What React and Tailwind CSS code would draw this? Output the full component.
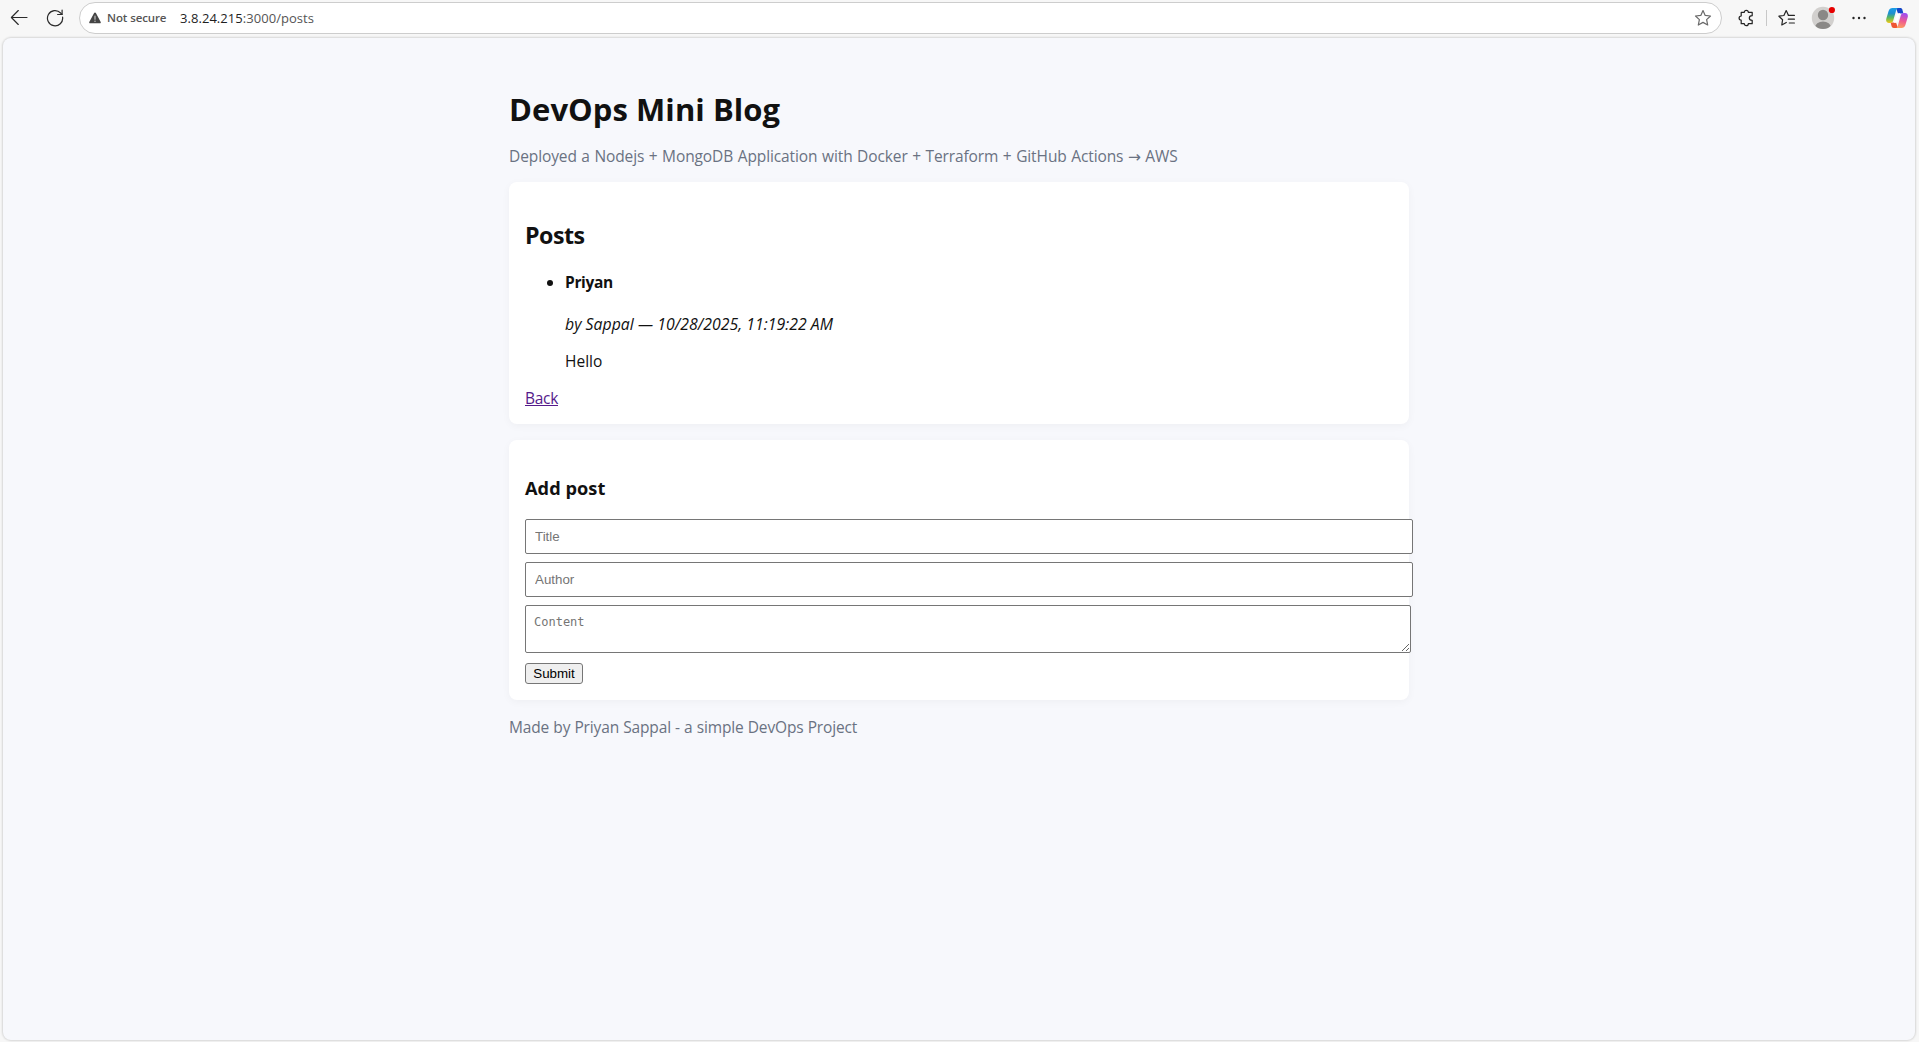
import React from 'react';

function BackIcon() {
  return (
    <svg width="18" height="18" viewBox="0 0 18 18" fill="none" stroke="#2b2b2b" strokeWidth="1.15" strokeLinecap="round" strokeLinejoin="round">
      <path d="M17 8.500H1.500M8.300 1.500L1.400 8.500l6.900 7" />
    </svg>
  );
}

function ReloadIcon() {
  return (
    <svg width="18" height="18" viewBox="0 0 18 18" fill="none" stroke="#2b2b2b" strokeWidth="1.2" strokeLinecap="round" strokeLinejoin="round">
      <path d="M16.6 8.2A7.6 7.6 0 1 1 14.6 4L16 5.4" />
      <path d="M16.1 1v4.5h-4.5" />
    </svg>
  );
}

function WarningIcon() {
  return (
    <svg width="12" height="12" viewBox="0 0 12 12">
      <path d="M5.1 1 .3 9.9c-.3.6.1 1.3.8 1.3h9.8c.7 0 1.1-.7.8-1.3L6.9 1a1 1 0 0 0-1.8 0z" fill="#454545" />
      <path d="M6 4v3.3" stroke="#c9c9c9" strokeWidth="1.1" strokeLinecap="round" />
      <circle cx="6" cy="9.2" r=".7" fill="#c9c9c9" />
    </svg>
  );
}

function StarIcon() {
  return (
    <svg width="18" height="18" viewBox="0 0 18 18" fill="none" stroke="#6a6a6a" strokeWidth="1.2" strokeLinejoin="round">
      <path d="M9 1.500l2.200 4.900 5.300.6-3.900 3.600 1.100 5.400L9 13.400 4.300 16l1.100-5.400L1.500 7l5.300-.6z" />
    </svg>
  );
}

function PuzzleIcon() {
  return (
    <svg width="16" height="18" viewBox="0 0 16 18" fill="none" stroke="#242424" strokeWidth="1.2" strokeLinejoin="round">
      <path d="M3.2 3.3h3.1c0-1.2.8-2 2-2s2 .8 2 2h3.9v3.4c-2 0-2.9 1-2.9 2.3s.9 2.3 2.9 2.3v3.4h-3.9c0 1.2-.8 2-2 2s-2-.8-2-2H3.2v-3.5C1.900 11.200 1.100 10.300 1.100 9.100s.8-2.100 2.100-2.100z" />
    </svg>
  );
}

function FavoritesIcon() {
  return (
    <svg width="18" height="18" viewBox="0 0 18 18" fill="none" stroke="#242424" strokeWidth="1.2" strokeLinecap="round" strokeLinejoin="round">
      <path d="M10.400 6.300L8.200 1.600 5.900 6.500.9 7.200l3.700 3.500L3.800 16l4.500-2.500" />
      <path d="M10.400 6.400h6M10.300 10.200h6.100M11.300 14h5.100" />
    </svg>
  );
}

function AvatarIcon() {
  return (
    <svg width="24" height="24" viewBox="0 0 24 24">
      <defs>
        <clipPath id="avatar-disc">
          <circle cx="12" cy="13" r="11" />
        </clipPath>
      </defs>
      <circle cx="12" cy="13" r="11.200" fill="#d2d0ce" />
      <g clipPath="url(#avatar-disc)" fill="#8a8886">
        <circle cx="12" cy="10" r="5.200" />
        <ellipse cx="12" cy="22.500" rx="8" ry="6" />
      </g>
      <circle cx="20.900" cy="5" r="3.100" fill="#e60000" />
    </svg>
  );
}

function DotsIcon() {
  return (
    <svg width="14" height="4" viewBox="0 0 14 4" fill="#242424">
      <circle cx="1.500" cy="2" r="1.200" />
      <circle cx="7" cy="2" r="1.200" />
      <circle cx="12.500" cy="2" r="1.200" />
    </svg>
  );
}

function CopilotIcon() {
  return (
    <svg width="22" height="20" viewBox="0 0 22 20">
      <defs>
        <linearGradient id="cp-left" x1="0" y1="0" x2="0" y2="1">
          <stop offset="0" stopColor="#1a9ee8" />
          <stop offset=".35" stopColor="#1d8fd0" />
          <stop offset=".65" stopColor="#5cb95c" />
          <stop offset="1" stopColor="#f3c918" />
        </linearGradient>
        <linearGradient id="cp-right" x1="0.500" y1="0" x2="0.300" y2="1">
          <stop offset="0" stopColor="#a04df0" />
          <stop offset=".5" stopColor="#ee5a92" />
          <stop offset="1" stopColor="#ffa25c" />
        </linearGradient>
      </defs>
      <path d="M10 0h4.300c1.100 0 1.800.7 2.100 1.700L17.400 5.500H12z" fill="#1446c8" />
      <path d="M12 20H7.700c-1.100 0-1.800-.7-2.100-1.700L4.600 14.500H10z" fill="#ef5633" />
      <path d="M6.500 0h6c-1.500 0-2 1.200-2.400 2.600L7.400 12c-.5 1.900-1.300 3-3.300 3H3c-2.400 0-3.300-2-2.700-4.200L2.600 3C3.200 1 4.500 0 6.500 0z" fill="url(#cp-left)" />
      <path d="M15.500 20h-6c1.500 0 2-1.200 2.400-2.600L14.600 8c.5-1.900 1.300-3 3.300-3H19c2.400 0 3.300 2 2.700 4.200L19.400 17c-.6 2-1.900 3-3.900 3z" fill="url(#cp-right)" />
      <path d="M14.400 5.200h-1.200c-1.600 0-2.500.9-2.900 2.300l-1.500 5.100c-.3 1-.7 1.700-1.300 2.200h1.300c1.600 0 2.500-.9 2.900-2.300l1.500-5.100c.3-1 .6-1.700 1.200-2.200z" fill="#fff" />
    </svg>
  );
}

function BrowserBar() {
  return (
    <header className="flex h-[38px] shrink-0 items-start">
      <div className="ml-[10px] mt-[9px] shrink-0"><BackIcon /></div>
      <div className="ml-[18px] mt-[9px] shrink-0"><ReloadIcon /></div>
      <div className="ml-[15px] mt-[2px] flex h-8 w-[1643px] items-center rounded-full border border-[#cdcdcd] bg-white pl-[9px] pr-[9px]">
        <WarningIcon />
        <span className="ml-[6px] w-[73px] text-[11.5px] leading-4 font-semibold tracking-[-0.1px] text-[#555]">Not secure</span>
        <span className="text-[13px] leading-4 tracking-[0.05px] text-[#555]">
          <span className="text-[#1f1f1f]">3.8.24.215</span>:3000/posts
        </span>
        <div className="ml-auto"><StarIcon /></div>
      </div>
      <div className="ml-[16px] mt-[9px]"><PuzzleIcon /></div>
      <div className="ml-[12px] mt-[10px] h-4 w-px bg-[#c8c8c8]" />
      <div className="ml-[11px] mt-[9px]"><FavoritesIcon /></div>
      <div className="ml-[15px] mt-[5px]"><AvatarIcon /></div>
      <div className="ml-[17px] mt-4 flex"><DotsIcon /></div>
      <div className="ml-[20px] mt-2"><CopilotIcon /></div>
    </header>
  );
}

function Card({ children }) {
  return (
    <section className="rounded-lg bg-white px-4 shadow-[0_2px_8px_rgba(0,0,0,0.04)]">{children}</section>
  );
}

const field =
  "block h-[35px] w-[888px] rounded-[2px] border border-[#767676] bg-white px-[9px] font-['Liberation_Sans',Arial,sans-serif] text-[13.333px] tracking-normal outline-none placeholder:text-[#757575]";

export default function App() {
  return (
    <div className="flex h-[1042px] w-[1919px] flex-col overflow-hidden bg-[#f7f7f7] font-['Open_Sans','Noto_Sans',sans-serif] text-[#111]">
      <BrowserBar />
      <main className="ml-[3px] h-[1002px] w-[1912px] rounded-lg bg-[#f7f8fc] shadow-[0_0_2px_1px_rgba(0,0,0,0.13)]">
        <div className="ml-[506px] w-[900px] pt-[50px] text-[15.5px] leading-[22px]">
          <h1 className="text-[31px] leading-[42px] font-bold tracking-[0.06px]">DevOps Mini Blog</h1>
          <p className="my-[15px] h-[22px] whitespace-nowrap tracking-[-0.1px] [word-spacing:0.6px] text-gray-500">
            Deployed a Nodejs + MongoDB Application with Docker + Terraform + GitHub Actions{' '}
            <span className="font-['DejaVu_Sans'] leading-none">→</span> AWS
          </p>

          <Card>
            <div className="pt-[37px] pb-[15px]">
              <h2 className="text-[23.2px] leading-8 font-bold tracking-[-0.5px]">Posts</h2>
              <ul className="mt-5 mb-[15px] list-disc pl-10">
                <li>
                  <h4 className="font-bold tracking-[-0.35px]">Priyan</h4>
                  <p className="mt-5 text-[15.8px] tracking-[0.03px] italic">by Sappal — 10/28/2025, 11:19:22 AM</p>
                  <p className="mt-[15px]">Hello</p>
                </li>
              </ul>
              <a href="#" className="block w-fit tracking-[-0.3px] text-[#551a8b] underline">Back</a>
            </div>
          </Card>

          <div className="mt-4">
            <Card>
              <div className="flex flex-col items-start gap-2 pt-[35px] pb-4">
                <h3 className="mb-[10px] text-[18.2px] leading-[26px] font-bold tracking-[0.05px]">Add post</h3>
                <input className={field} placeholder="Title" />
                <input className={field} placeholder="Author" />
                <textarea
                  className="block h-12 w-[886px] resize rounded-[2px] border border-[#767676] bg-white px-2 py-[9px] font-['DejaVu_Sans_Mono',monospace] text-[12px] leading-[15px] outline-none placeholder:text-[#757575]"
                  placeholder="Content"
                />
                <button className="mt-[2px] h-[21px] w-[58px] rounded-[3px] border border-[#767676] bg-[#efefef] font-['Liberation_Sans',Arial,sans-serif] text-[13.333px] leading-[15px] text-black">
                  Submit
                </button>
              </div>
            </Card>
          </div>

          <p className="mt-4 tracking-[-0.14px] [word-spacing:0.25px] text-gray-500">Made by Priyan Sappal - a simple DevOps Project</p>
        </div>
      </main>
    </div>
  );
}
